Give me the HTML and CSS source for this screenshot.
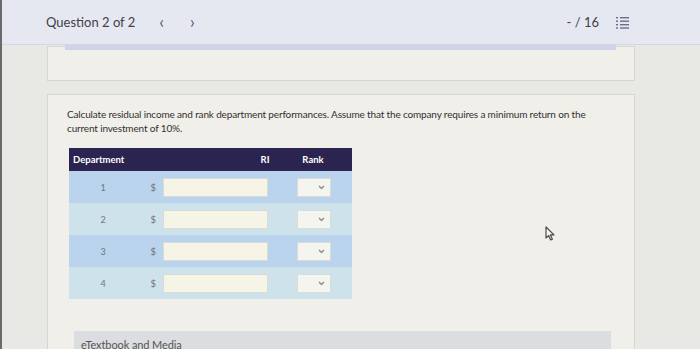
FILE: index.html
```html
<!DOCTYPE html>
<html>
<head>
<meta charset="utf-8">
<link rel="stylesheet" href="styles.css">
</head>
<body>
<header class="topbar">
  <div class="qnav">
    <span class="qtitle">Question 2 of 2</span>
    <span class="arrow prev">&lsaquo;</span>
    <span class="arrow next">&rsaquo;</span>
  </div>
  <div class="qright">
    <span class="score">- / 16</span>
    <svg class="listicon" width="13" height="13" viewBox="0 0 13 13">
      <g fill="#6b6f86">
        <rect x="0" y="1" width="2" height="1.4"/>
        <rect x="0" y="4.5" width="2" height="1.4"/>
        <rect x="0" y="8" width="2" height="1.4"/>
        <rect x="0" y="11.3" width="2" height="1.4"/>
        <rect x="4" y="1" width="9" height="1.4"/>
        <rect x="4" y="4.5" width="9" height="1.4"/>
        <rect x="4" y="8" width="9" height="1.4"/>
        <rect x="4" y="11.3" width="9" height="1.4"/>
      </g>
    </svg>
  </div>
</header>
<div class="shadowstrip"></div>
<main class="content">
  <div class="card card-empty"></div>
  <section class="card card-main">
    <p class="prompt">Calculate residual income and rank department performances. Assume that the company requires a minimum return on the current investment of 10%.</p>
    <div class="table">
      <div class="thead">
        <span class="th-dept">Department</span>
        <span class="th-ri">RI</span>
        <span class="th-rank">Rank</span>
      </div>
      <div class="row odd">
        <span class="num">1</span><span class="dollar">$</span><span class="input"></span><span class="select"><svg width="7" height="5" viewBox="0 0 7 5"><path d="M1 1 L3.5 3.5 L6 1" fill="none" stroke="#8a8a8a" stroke-width="1.3"/></svg></span>
      </div>
      <div class="row even">
        <span class="num">2</span><span class="dollar">$</span><span class="input"></span><span class="select"><svg width="7" height="5" viewBox="0 0 7 5"><path d="M1 1 L3.5 3.5 L6 1" fill="none" stroke="#8a8a8a" stroke-width="1.3"/></svg></span>
      </div>
      <div class="row odd">
        <span class="num">3</span><span class="dollar">$</span><span class="input"></span><span class="select"><svg width="7" height="5" viewBox="0 0 7 5"><path d="M1 1 L3.5 3.5 L6 1" fill="none" stroke="#8a8a8a" stroke-width="1.3"/></svg></span>
      </div>
      <div class="row even">
        <span class="num">4</span><span class="dollar">$</span><span class="input"></span><span class="select"><svg width="7" height="5" viewBox="0 0 7 5"><path d="M1 1 L3.5 3.5 L6 1" fill="none" stroke="#8a8a8a" stroke-width="1.3"/></svg></span>
      </div>
    </div>
    <div class="etext">eTextbook and Media</div>
  </section>
</main>
<svg class="cursor" width="11" height="15" viewBox="0 0 11 15">
  <path d="M1 1 L1 12 L3.6 9.6 L5.6 14 L7.4 13.2 L5.4 8.9 L9 8.9 Z" fill="#f4f4f2" stroke="#4a4a4a" stroke-width="1.2" stroke-linejoin="round"/>
</svg>
</body>
</html>
```
FILE: styles.css
```css
html, body {
  margin: 0;
  padding: 0;
}
body {
  width: 700px;
  height: 349px;
  overflow: hidden;
  background: #e8e8e5;
  font-family: Lato, "Open Sans", sans-serif;
  color: #333;
  position: relative;
  border-left: 2px solid #6a6a6a;
  box-sizing: border-box;
}
.topbar {
  height: 45px;
  background: #e6e8f1;
  border-bottom: 1px solid #d3d6e6;
  box-sizing: border-box;
  display: flex;
  align-items: center;
  justify-content: space-between;
  padding: 0 71px 0 44px;
}
.qnav {
  display: flex;
  align-items: center;
  font-size: 13px;
  color: #3f3f46;
}
.arrow {
  font-size: 17px;
  color: #555a6e;
  line-height: 1;
  position: relative;
  top: -1px;
}
.prev { margin-left: 24px; }
.next { margin-left: 26px; }
.qright {
  display: flex;
  align-items: center;
  gap: 17px;
}
.score {
  font-size: 13px;
  color: #3f3f46;
}
.listicon {
  display: block;
}
.shadowstrip {
  position: absolute;
  left: 63px;
  top: 45px;
  width: 551px;
  height: 5px;
  background: #d0d3e7;
}
.content {
  padding-left: 45px;
  width: 588px;
}
.card {
  background: #f0efe9;
  border: 1px solid #d6d6d1;
  box-sizing: border-box;
}
.card-empty {
  height: 35px;
  margin-top: 1px;
}
.card-main {
  margin-top: 13px;
  height: 300px;
  padding: 12px 0 0 19px;
}
.prompt {
  margin: 0;
  font-size: 10px;
  line-height: 14px;
  color: #303030;
  width: 530px;
  letter-spacing: -0.15px;
}
.table {
  margin-top: 13px;
  margin-left: 2px;
  width: 283px;
}
.thead {
  height: 23px;
  background: #2b2451;
  color: #fff;
  font-weight: 700;
  font-size: 9.5px;
  display: flex;
  align-items: center;
}
.th-dept { padding-left: 4px; width: 179px; }
.th-ri { width: 26px; text-align: center; }
.th-rank { width: 40px; margin-left: 15px; text-align: center; }
.row {
  height: 32px;
  display: flex;
  align-items: center;
  font-size: 9px;
  color: #6f7378;
}
.row.odd { background: #b9d4ec; }
.row.even { background: #cee2ec; }
.num {
  width: 68px;
  text-align: center;
}
.dollar {
  width: 19px;
  text-align: right;
  font-size: 9.5px;
}
.input {
  margin-left: 7px;
  width: 105px;
  height: 19px;
  background: #f6f4e6;
  border: 1px solid #d9dbd6;
  box-sizing: border-box;
}
.select {
  margin-left: 29px;
  width: 34px;
  height: 19px;
  background: #f5f5f0;
  border: 1px solid #d9dbd6;
  box-sizing: border-box;
  display: flex;
  align-items: center;
  justify-content: flex-end;
  padding-right: 5px;
}
.select svg { display: block; }
.etext {
  margin-top: 32px;
  margin-left: 7px;
  width: 537px;
  height: 30px;
  background: #dcdde1;
  font-size: 11px;
  color: #555;
  padding: 7px 0 0 7px;
  box-sizing: border-box;
  letter-spacing: -0.1px;
}
.cursor {
  position: absolute;
  left: 543px;
  top: 226px;
}
```
